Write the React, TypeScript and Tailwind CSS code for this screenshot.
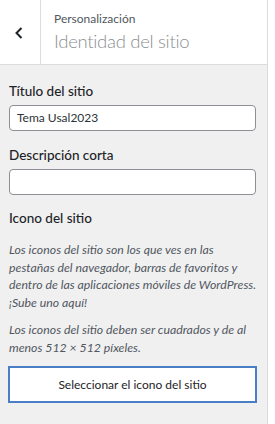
import React from "react";

export default function App() {
  return (
    <div
      className="w-[275px] h-[424px] bg-white flex overflow-hidden"
      style={{ fontFamily: 'Lato, "Open Sans", sans-serif' }}
    >
      <div className="w-[268px] h-full bg-[#f0f0f1] border-r border-[#dcdcde] flex flex-col">
        <div className="h-[65px] bg-white border-b border-[#dcdcde] flex">
          <div className="w-[41px] border-r border-[#dcdcde] flex items-center justify-center">
            <svg width="10" height="14" viewBox="0 0 10 14" className="mt-[1px] ml-[-3px]">
              <path d="M7.5 2 L2.5 7 L7.5 12" fill="none" stroke="#1d2327" strokeWidth="2" />
            </svg>
          </div>
          <div className="pl-[13px] pt-[10px] flex flex-col">
            <span className="text-[12px] leading-[18px] text-[#50575e]">Personalización</span>
            <span className="text-[18.5px] leading-[26px] tracking-[-0.3px] text-[#8c8f94] font-light">Identidad del sitio</span>
          </div>
        </div>
        <div className="pl-[9px] pt-[16px] flex flex-col w-[256px]">
          <label className="text-[13.5px] leading-[20px] text-[#1d2327] font-medium">Título del sitio</label>
          <div className="mt-[4px] h-[26px] bg-white border border-[#8c8f94] rounded-[4px] flex items-center px-[7px] text-[12px] text-[#2c3338]">
            Tema Usal2023
          </div>
          <label className="mt-[14px] text-[13.5px] leading-[20px] text-[#1d2327] font-medium">Descripción corta</label>
          <div className="mt-[4px] h-[26px] bg-white border border-[#8c8f94] rounded-[4px]" />
          <label className="mt-[13px] text-[13.5px] leading-[20px] text-[#1d2327] font-medium">Icono del sitio</label>
          <p className="mt-[13px] -mr-[10px] whitespace-nowrap text-[12.3px] leading-[17.5px] italic text-[#50575e]">
            Los iconos del sitio son los que ves en las
            <br />
            pestañas del navegador, barras de favoritos y
            <br />
            dentro de las aplicaciones móviles de WordPress.
            <br />
            ¡Sube uno aquí!
          </p>
          <p className="mt-[10px] -mr-[10px] whitespace-nowrap text-[12.3px] leading-[17.5px] italic text-[#50575e]">
            Los iconos del sitio deben ser cuadrados y de al
            <br />
            menos 512 × 512 píxeles.
          </p>
          <button className="mt-[10px] -mx-px h-[37px] bg-white border-2 border-[#4a7fc8] text-[12px] text-[#1d2327]">
            Seleccionar el icono del sitio
          </button>
        </div>
      </div>
    </div>
  );
}
